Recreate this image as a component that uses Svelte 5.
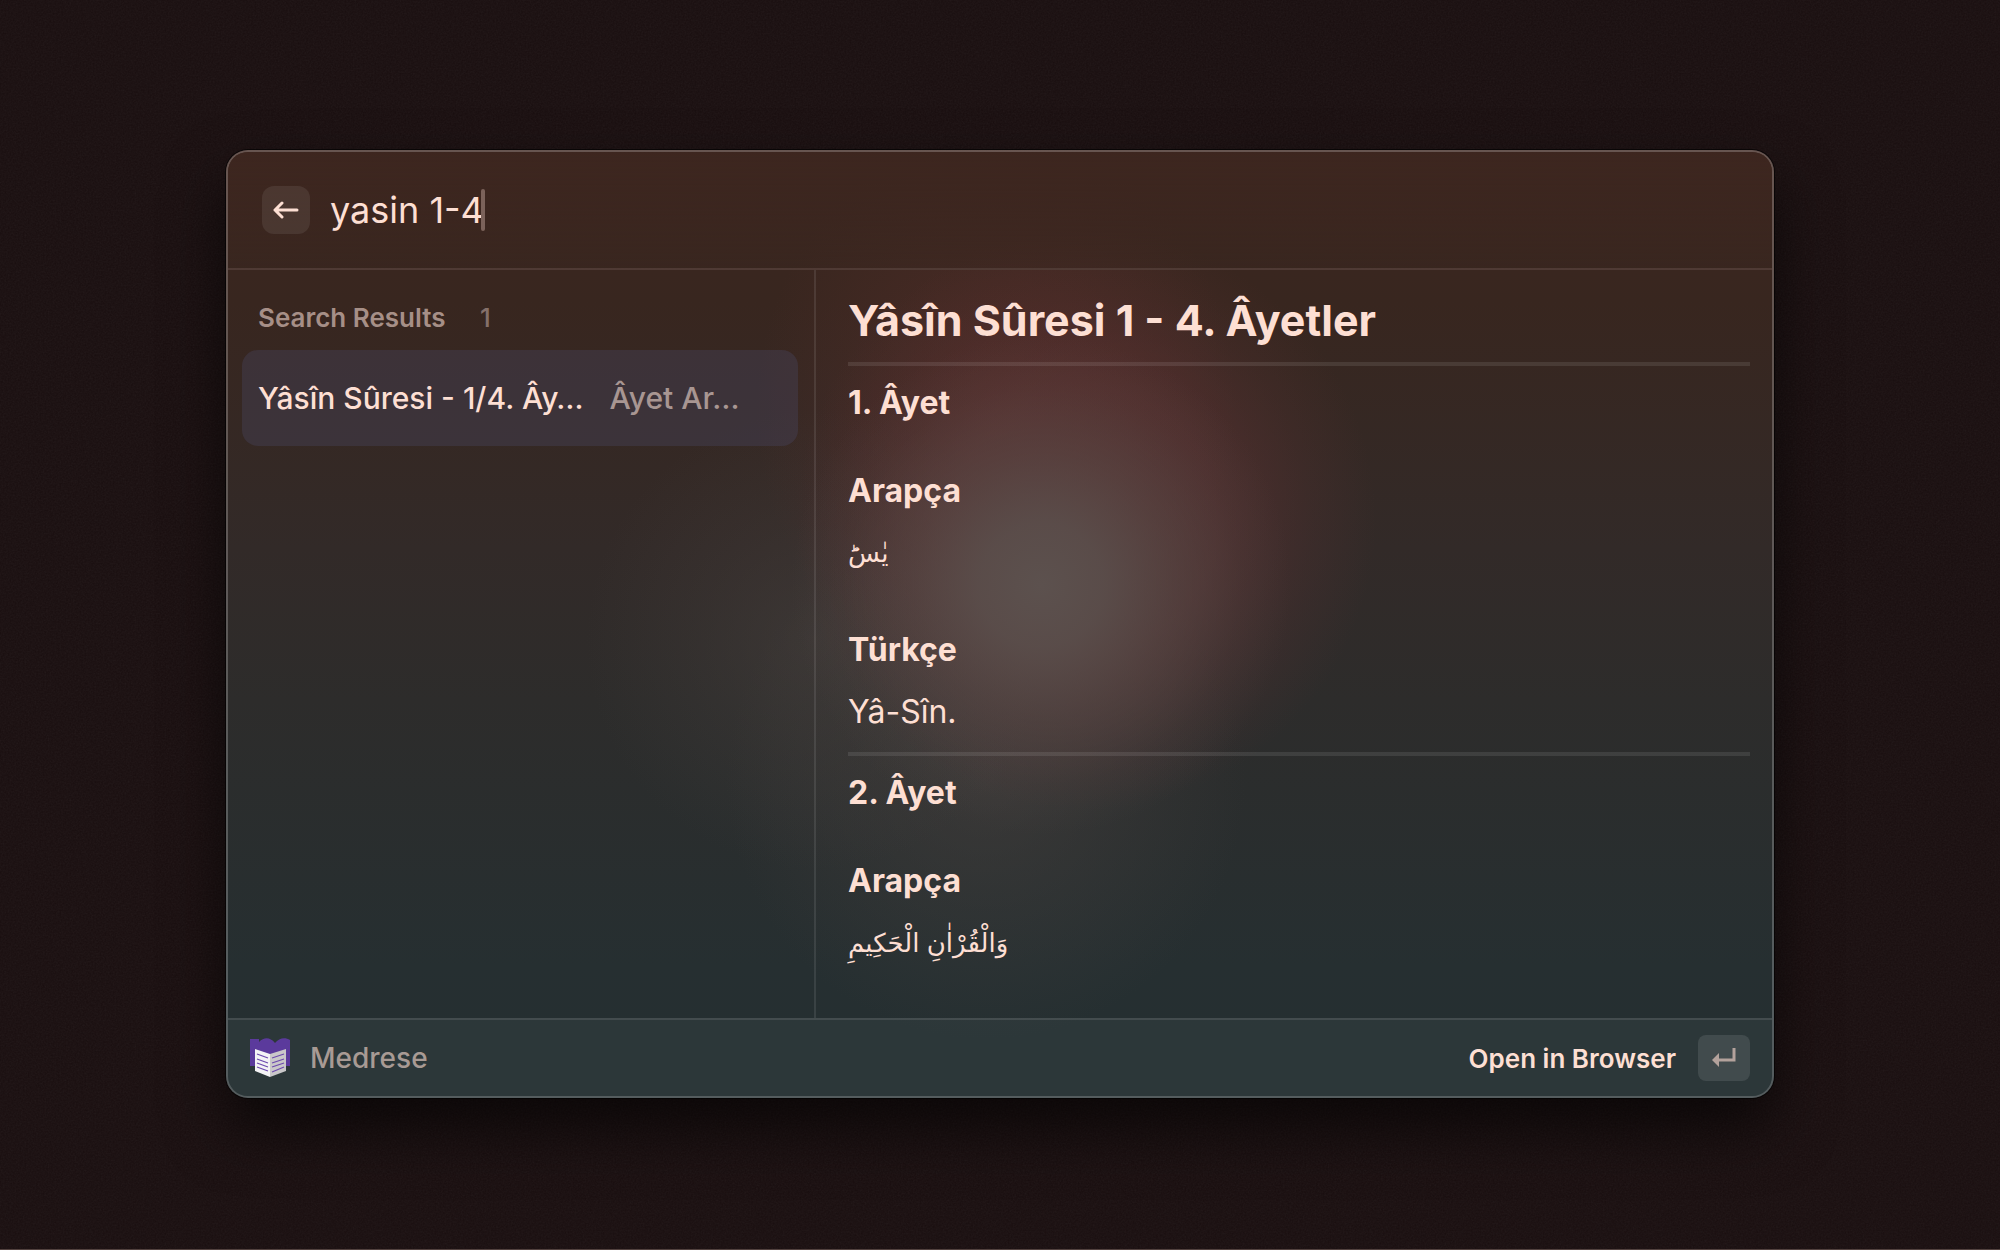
<script lang="ts">
  let query = $state('yasin 1-4');
  const verses = [
    { no: '1. Âyet', arabic: 'يٰسَؕ', turkish: 'Yâ-Sîn.' },
    { no: '2. Âyet', arabic: 'وَالْقُرْاٰنِ الْحَكِيمِ', turkish: '' }
  ];
</script>

<div class="desktop">
  <svg class="grain" aria-hidden="true">
    <filter id="grain">
      <feTurbulence type="fractalNoise" baseFrequency="0.6" numOctaves="2" />
      <feColorMatrix type="saturate" values="0" />
    </filter>
    <rect width="100%" height="100%" filter="url(#grain)" />
  </svg>

  <main class="window">
    <header>
      <button class="back" aria-label="Back">
        <svg width="26" height="20" viewBox="0 0 26 20" aria-hidden="true">
          <path d="M9 3 2 10l7 7M2 10h22" />
        </svg>
      </button>
      <div class="field">
        <input aria-label="Search" bind:value={query} size="9" />
        <span class="caret"></span>
      </div>
    </header>

    <div class="body">
      <nav class="list" aria-label="Results">
        <h2 class="section">Search Results <span>1</span></h2>
        <button class="row">
          <span class="name">Yâsîn Sûresi - 1/4. Ây…</span>
          <span class="sub">Âyet Ar…</span>
        </button>
      </nav>

      <article class="detail">
        <h1>Yâsîn Sûresi 1 - 4. Âyetler</h1>
        {#each verses as verse}
          <hr />
          <h2>{verse.no}</h2>
          <h3>Arapça</h3>
          <p class="arabic" lang="ar">{verse.arabic}</p>
          {#if verse.turkish}
            <h3>Türkçe</h3>
            <p class="turkish">{verse.turkish}</p>
          {/if}
        {/each}
      </article>
    </div>

    <footer>
      <svg class="logo" width="40" height="40" viewBox="0 0 40 40" aria-hidden="true">
        <path fill="#5b3a9c" d="M0 1h9v3c5-5 11-5 16 1 4-5 10-6 15-3v26H0z" />
        <path fill="#f4f3f5" d="M5 11l15 5v23L5 33z" />
        <path fill="#c9c7c9" d="M20 16l16-5v22l-16 6z" />
        <path
          stroke="#6d4aae"
          stroke-width="1.3"
          fill="none"
          d="M7 16l11 4M7 21l11 4M7 25l11 4M7 29l11 4M22 20l12-4M22 25l12-4M22 29l12-4M22 34l12-5"
        />
      </svg>
      <span class="app">Medrese</span>
      <button class="action">
        Open in Browser
        <kbd>
          <svg width="24" height="20" viewBox="0 0 24 20" aria-hidden="true">
            <path fill="none" stroke="currentColor" stroke-width="3" d="M22 0v12H6" />
            <path fill="currentColor" d="M0 12l7-7v14z" />
          </svg>
        </kbd>
      </button>
    </footer>
  </main>
</div>

<style>
  :global(body) {
    margin: 0;
    background: #1d1314;
  }
  .desktop {
    box-sizing: border-box;
    position: relative;
    height: 100vh;
    padding: 150px 226px 151px;
    border-bottom: 1px solid #52423f;
    display: flex;
    background: #190e0f;
    color: #fddfd3;
    font-family: Inter, 'DejaVu Sans', sans-serif;
  }
  .grain {
    position: absolute;
    inset: 0;
    width: 100%;
    height: 100%;
    opacity: 0.06;
  }
  .window {
    position: relative;
    flex: 1;
    min-width: 0;
    display: flex;
    flex-direction: column;
    overflow: hidden;
    border: 2px solid #ffffff38;
    border-radius: 22px;
    background:
      radial-gradient(circle 250px at 815px 435px, #5c514e 0%, #5b504ddd 25%, #5a4d4a88 52%, #5a4d4a28 80%, #5a4d4a00 100%),
      radial-gradient(circle 290px at 860px 370px, #613334a0 0%, #61333488 45%, #61333430 78%, #61333400 100%),
      radial-gradient(ellipse 240px 280px at 770px 260px, #5d302d80 0%, #5d302d48 50%, #5d302d00 100%),
      radial-gradient(circle 230px at 590px 490px, #4e474468 0%, #4e474430 50%, #4e474400 100%),
      radial-gradient(circle 260px at 760px 630px, #49434180 0%, #49434140 50%, #49434100 100%),
      linear-gradient(#3d261f 0%, #38261f 16%, #322a28 42%, #2d2c2b 58%, #262f31 86%, #242f31 100%);
    background-origin: border-box;
    box-shadow:
      0 0 0 1px #000000a0,
      0 30px 60px #000000a0;
  }
  button,
  input {
    font: inherit;
    color: inherit;
    border: 0;
    padding: 0;
    background: none;
  }
  h1,
  h2,
  h3,
  p {
    margin: 0;
  }
  header {
    height: 116px;
    flex: none;
    display: flex;
    align-items: center;
    gap: 20px;
    padding: 0 34px;
    border-bottom: 2px solid #ffffff18;
    background: linear-gradient(#3d261f, #38261f80);
  }
  .back {
    width: 48px;
    height: 48px;
    border-radius: 12px;
    background: #ffffff14;
    display: grid;
    place-items: center;
  }
  .back svg {
    fill: none;
    stroke: currentColor;
    stroke-width: 3;
    stroke-linecap: round;
    stroke-linejoin: round;
  }
  .field {
    display: flex;
    align-items: center;
  }
  input {
    field-sizing: content;
    font-size: 36px;
    line-height: 44px;
    outline: 0;
  }
  .caret {
    width: 4px;
    height: 42px;
    margin-left: -3px;
    border-radius: 2px;
    background: #7b625a;
  }
  .body {
    flex: 1;
    min-height: 0;
    display: flex;
  }
  .list {
    box-sizing: border-box;
    width: 588px;
    flex: none;
    padding: 28px 16px 0 14px;
    border-right: 2px solid #ffffff18;
  }
  .section {
    padding: 0 16px;
    margin-bottom: 12px;
    font-size: 26px;
    line-height: 40px;
    font-weight: 600;
    color: #a68f87;
  }
  .section span {
    margin-left: 28px;
    font-weight: 500;
    color: #85706a;
  }
  .row {
    width: 100%;
    height: 96px;
    padding: 0 16px;
    display: flex;
    align-items: center;
    gap: 26px;
    border-radius: 16px;
    background: #48466060;
    font-size: 30px;
    font-weight: 500;
    white-space: nowrap;
  }
  .sub {
    color: #a89692;
  }
  .detail {
    flex: 1;
    min-width: 0;
    overflow: hidden;
    padding: 20px 22px 0 32px;
    font-size: 32px;
    line-height: 40px;
  }
  h1 {
    font-size: 43px;
    line-height: 60px;
    font-weight: 700;
  }
  hr {
    height: 4px;
    margin: 12px 0 17px;
    border: 0;
    background: #ffffff18;
  }
  .detail h2,
  .detail h3 {
    font-size: 32px;
    line-height: 40px;
    font-weight: 700;
  }
  .detail h3 {
    margin: 48px 0 22px;
  }
  .detail .arabic {
    font-size: 26px;
    margin-bottom: 57px;
  }
  .turkish {
    margin-bottom: 20px;
  }
  footer {
    height: 76px;
    flex: none;
    display: flex;
    align-items: center;
    gap: 20px;
    padding: 0 22px;
    border-top: 2px solid #ffffff1c;
    background: #444f5240;
    font-size: 28px;
    font-weight: 500;
  }
  .app {
    flex: 1;
    color: #a89a94;
  }
  .action {
    display: flex;
    align-items: center;
    gap: 22px;
    font-size: 26px;
    font-weight: 600;
  }
  kbd {
    width: 52px;
    height: 46px;
    display: grid;
    place-items: center;
    border-radius: 8px;
    background: #ffffff1a;
    color: #b3a29c;
  }
</style>
